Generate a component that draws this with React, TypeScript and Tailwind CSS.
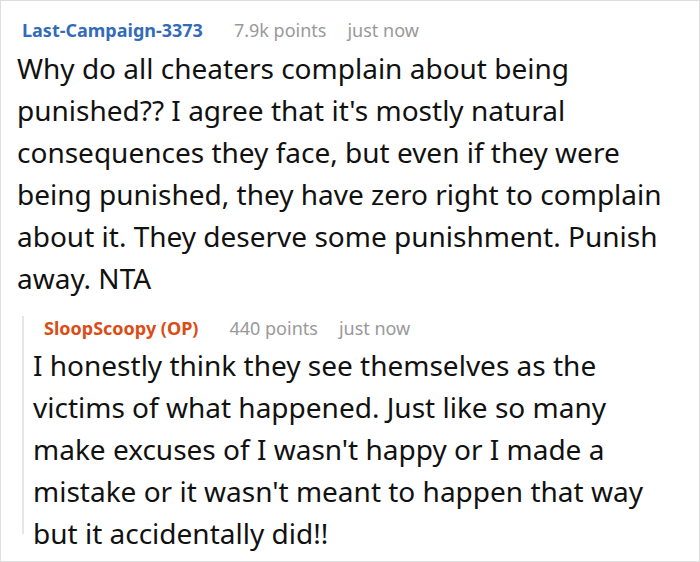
const Meta = ({
  name,
  color,
  points,
}: {
  name: string;
  color: string;
  points: string;
}) => (
  <div className="flex items-baseline text-[18px] leading-[24px]">
    <span className={`font-bold ${color}`}>{name}</span>
    <span className="ml-[31px] text-[#999999]">{points}</span>
    <span className="ml-[21px] text-[#999999]">just now</span>
  </div>
);

export default function App() {
  return (
    <div className="w-[700px] h-[562px] overflow-hidden border border-[#dedede] bg-white font-['Noto_Sans',sans-serif] text-[#111111]">
      <div className="pt-[17px]">
        <div className="pl-[21px]">
          <Meta
            name="Last-Campaign-3373"
            color="text-[#336bb8]"
            points="7.9k points"
          />
        </div>
        <p className="mt-[5px] pl-[16px] text-[28px] leading-[42px]">
          Why do all cheaters complain about being
          <br />
          punished?? I agree that it's mostly natural
          <br />
          consequences they face, but even if they were
          <br />
          being punished, they have zero right to complain
          <br />
          about it. They deserve some punishment. Punish
          <br />
          away. NTA
        </p>
        <div className="ml-[21px] mt-[26px] h-[218px] border-l-2 border-[#e6e6e6]">
          <div className="-mt-[9px] pl-[20px]">
            <Meta
              name="SloopScoopy (OP)"
              color="text-[#dc4c16]"
              points="440 points"
            />
          </div>
          <p className="mt-[4px] pl-[9px] text-[28px] leading-[42px]">
            I honestly think they see themselves as the
            <br />
            victims of what happened. Just like so many
            <br />
            make excuses of I wasn't happy or I made a
            <br />
            mistake or it wasn't meant to happen that way
            <br />
            but it accidentally did!!
          </p>
        </div>
      </div>
    </div>
  );
}
